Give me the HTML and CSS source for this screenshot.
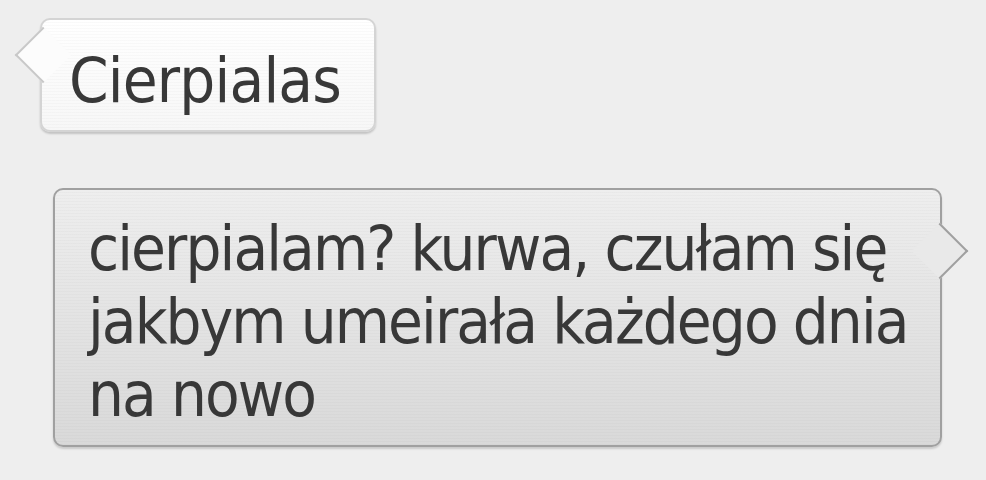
FILE: index.html
```html
<!DOCTYPE html>
<html lang="pl">
<head>
<meta charset="utf-8">
<link rel="stylesheet" href="styles.css">
</head>
<body>
<div class="chat">
  <div class="bubble bubble-in">Cierpialas</div>
  <div class="bubble bubble-out">cierpialam? kurwa, czułam się<br>jakbym umeirała każdego dnia<br>na nowo</div>
</div>
</body>
</html>
```
FILE: styles.css
```css
html, body {
  margin: 0;
  padding: 0;
  background: #eeeeee;
  width: 986px;
  height: 480px;
  overflow: hidden;
}
.chat {
  display: flex;
  flex-direction: column;
  align-items: flex-start;
  font-family: "DejaVu Sans", Verdana, sans-serif;
  font-stretch: condensed;
  font-size: 63px;
  line-height: 73px;
  letter-spacing: -1.9px;
  color: #383838;
  white-space: nowrap;
}
.bubble {
  position: relative;
  z-index: 0;
  border-radius: 10px;
  box-sizing: border-box;
}
.bubble::after {
  content: "";
  position: absolute;
  width: 38px;
  height: 38px;
  z-index: -1;
  transform: rotate(45deg);
}
.bubble-in {
  margin: 18px 0 0 40px;
  width: 336px;
  padding: 24px 20px 13px 27px;
  letter-spacing: -0.8px;
  background:
    repeating-linear-gradient(to bottom, rgba(0,0,0,0) 0 2px, rgba(0,0,0,0.018) 2px 3px),
    linear-gradient(to bottom, #ffffff, #f7f7f7);
  border: 2px solid #d4d4d4;
  box-shadow: 0 2px 2px rgba(0,0,0,0.18);
}
.bubble-in::after {
  left: -19px;
  top: 15px;
  background: #fcfcfc;
  border-left: 2px solid #c8c8c8;
  border-bottom: 2px solid #c8c8c8;
}
.bubble-out {
  margin: 56px 0 0 53px;
  width: 889px;
  padding: 22px 20px 14px 33px;
  background:
    repeating-linear-gradient(to bottom, rgba(0,0,0,0) 0 2px, rgba(0,0,0,0.02) 2px 3px),
    linear-gradient(to bottom, #eeeeee, #d9d9d9);
  border: 2px solid #a0a0a0;
  box-shadow: 0 2px 2px rgba(0,0,0,0.15);
}
.bubble-out::after {
  right: -20px;
  top: 41px;
  background: #e9e9e9;
  border-top: 2px solid #a0a0a0;
  border-right: 2px solid #a0a0a0;
}
```
